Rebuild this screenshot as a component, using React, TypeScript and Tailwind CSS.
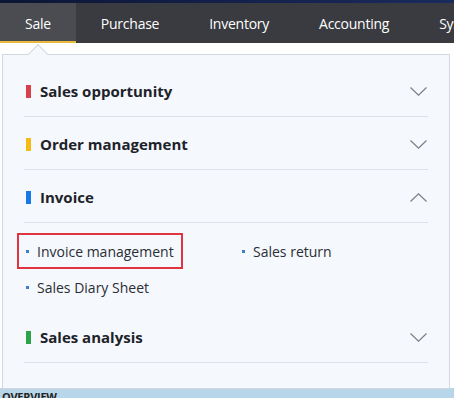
import React from 'react';

const tabs = ['Sale', 'Purchase', 'Inventory', 'Accounting', 'System'];

const sections = [
  { title: 'Sales opportunity', bar: 'bg-[#d8404c]', open: false },
  { title: 'Order management', bar: 'bg-[#f7b914]', open: false },
  { title: 'Invoice', bar: 'bg-[#1679e6]', open: true },
  { title: 'Sales analysis', bar: 'bg-[#2ea44a]', open: false },
];

const invoiceItems = [
  { label: 'Invoice management', active: true },
  { label: 'Sales return', active: false },
  { label: 'Sales Diary Sheet', active: false },
];

const Chevron = ({ up }: { up?: boolean }) => (
  <svg width="17" height="9" viewBox="0 0 17 9" className="shrink-0">
    <polyline
      points={up ? '0.5,8.5 8.5,0.8 16.5,8.5' : '0.5,0.5 8.5,8.2 16.5,0.5'}
      fill="none"
      stroke="#7b7e85"
      strokeWidth="1.2"
    />
  </svg>
);

export default function App() {
  return (
    <div
      className="relative w-[454px] h-[398px] overflow-hidden bg-white"
      style={{ fontFamily: '"Open Sans", "Noto Sans", sans-serif' }}
    >
      {/* top strip */}
      <div className="h-[3px] bg-gradient-to-r from-[#0c1534] via-[#14204a] to-[#1a2b5c]" />

      {/* nav */}
      <nav className="flex h-[40px] bg-[#393b40] text-white text-[14px] tracking-[-0.25px]">
        {tabs.map((t, i) => (
          <div
            key={t}
            className={`relative flex items-center px-[25px] whitespace-nowrap ${
              i === 0 ? 'bg-[#4a4c51]' : ''
            }`}
          >
            {t}
            {i === 0 && <div className="absolute left-0 right-0 bottom-0 h-[2px] bg-[#e9b93b]" />}
          </div>
        ))}
      </nav>

      {/* page behind */}
      <div className="absolute left-0 right-0 top-[388px] h-[10px] bg-[#b8d6e9]">
        <div className="pl-[2px] pt-[3px] text-[11px] leading-none font-bold text-[#222] tracking-tight">OVERVIEW</div>
      </div>

      {/* dropdown panel */}
      <div className="absolute left-[2px] top-[54px] w-[448px] h-[335px] border border-[#d3d8e0] bg-[#f5f8fd]">
        <div className="absolute left-[28px] top-[-8px] w-[14px] h-[14px] rotate-45 border-l border-t border-[#d3d8e0] bg-[#f5f8fd]" />

        <div className="relative pt-[9px]">
          {sections.map((s) => (
            <div key={s.title}>
              <div className="mx-[21px] h-[53px] pt-[3px] pl-[2px] flex items-center border-b border-[#dde1e8]">
                <div className={`w-[5px] h-[13px] ${s.bar}`} />
                <div className="ml-[9px] text-[15px] font-bold text-[#1e2229] flex-1">{s.title}</div>
                <div className="mr-[1px] flex items-center">
                  <Chevron up={s.open} />
                </div>
              </div>
              {s.open && (
                <div className="ml-[14px] pt-[10px] pb-[5px] grid grid-cols-[216px_216px]">
                  {invoiceItems.map((it) => (
                    <div key={it.label} className="h-[36px] flex">
                      <div
                        className={`flex items-center px-[7px] text-[14px] text-[#2a2e35] border-2 ${
                          it.active ? 'border-[#e0353e]' : 'border-transparent'
                        }`}
                      >
                        <span className="w-[3px] h-[3px] bg-[#3a7fcb] mr-[8px]" />
                        {it.label}
                      </div>
                    </div>
                  ))}
                </div>
              )}
            </div>
          ))}
        </div>
      </div>
    </div>
  );
}
